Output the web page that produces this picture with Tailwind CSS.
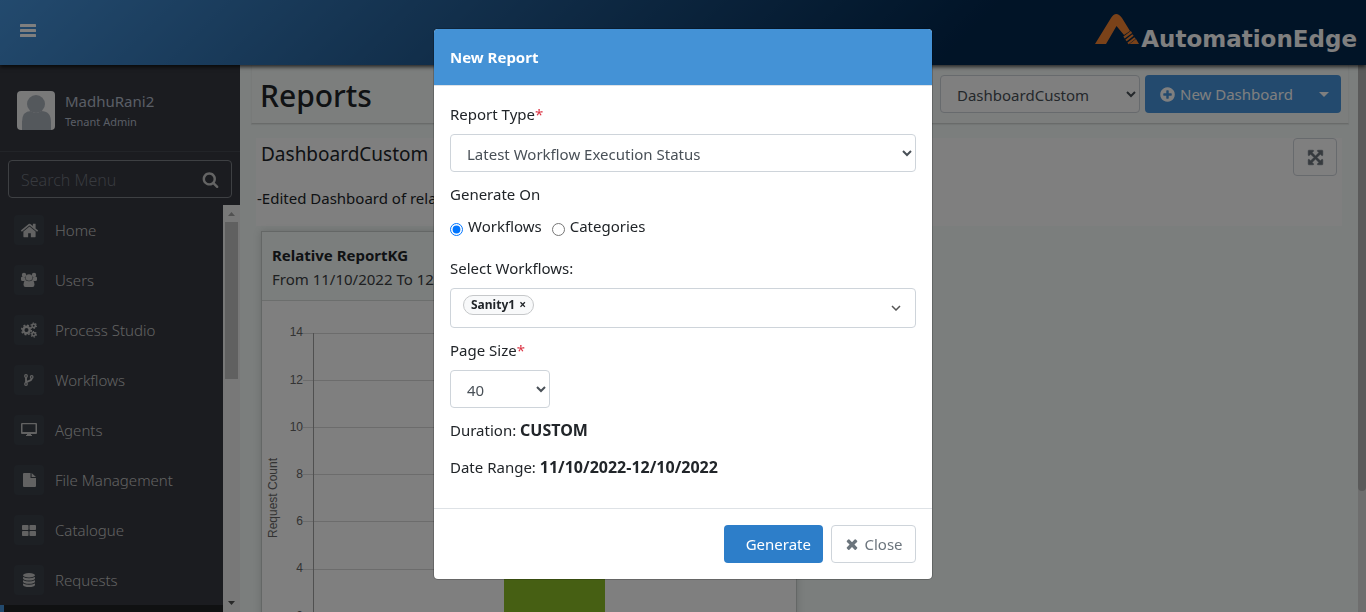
<!DOCTYPE html>
<html lang="en">
<head>
<meta charset="utf-8">
<title>Reports</title>
<script src="https://cdn.jsdelivr.net/npm/@tailwindcss/browser@4"></script>
</head>
<body class="h-screen overflow-hidden flex flex-col bg-[#f6fcfa] font-['Noto_Sans',sans-serif] text-[15px] leading-6 text-[#212529]">

<!-- Top bar -->
<header class="relative z-10 h-[65px] shrink-0 flex items-center justify-between pl-5 pr-[9px] bg-linear-135 from-[#4694dc] to-[#03284f] to-70% shadow-[0_2px_4px_rgba(0,0,0,0.7)]">
  <button aria-label="Toggle menu" class="text-white pb-1"><svg class="w-4 h-[14px]" viewBox="0 0 16 14" fill="currentColor"><rect y="0" width="16" height="3" rx="0.6"/><rect y="5" width="16" height="3" rx="0.6"/><rect y="10" width="16" height="3" rx="0.6"/></svg></button>
  <a href="#" class="flex items-end text-white pt-1">
    <svg class="w-[44px] h-8 mb-3" viewBox="0 0 44 32"><path fill="#f58433" d="M0 31 16 5Q21-3 27 5L35 18 29 22 21.500 13 11 31Z"/><path stroke="#f58433" stroke-width="2.200" d="M29 24.500 36.500 19M31 27.500 38 22M33 30.500 40 25"/><path fill="#f58433" d="M34.500 31 41 26 44 31Z"/></svg>
    <span class="ml-[2px] font-['DejaVu_Sans',sans-serif] font-bold text-[23px] leading-9">AutomationEdge</span>
  </a>
</header>

<div class="flex flex-1 min-h-0">
  <!-- Sidebar -->
  <aside class="w-60 shrink-0 flex flex-col bg-[#363840]">
    <div class="h-[87px] shrink-0 flex items-center gap-[10px] pl-[17px] pb-px pt-[6px] border-b border-[#454850]">
      <svg class="w-[38px] h-[39px] rounded" viewBox="0 0 38 39"><rect width="38" height="39" fill="#f2f2f2"/><g fill="#a9b0b9"><circle cx="19" cy="13" r="9"/><path d="M5 39V31Q5 20 14 20 19 24 24 20 34 20 34 31V39Z"/></g></svg>
      <div class="text-[#b4bccb]">
        <div class="text-[15px] leading-[22px]">MadhuRani2</div>
        <div class="text-[11px] leading-5">Tenant Admin</div>
      </div>
    </div>
    <div class="p-2 pb-[7px]">
      <form class="h-[38px] flex items-center rounded border border-[#7d8086] px-3">
        <input aria-label="Search Menu" placeholder="Search Menu" class="min-w-0 flex-1 pt-px bg-transparent text-base font-light outline-none placeholder:text-[#70757e]">
        <button type="button" aria-label="Search" class="text-[#c8c8c8]"><svg class="w-[17px] h-[17px]" viewBox="0 0 1792 1792" fill="currentColor"><path d="M1216 832q0-185-131.500-316.500t-316.500-131.500-316.500 131.500-131.500 316.500 131.500 316.500 316.500 131.500 316.500-131.500 131.500-316.500zm512 832q0 52-38 90t-90 38q-54 0-90-38l-343-342q-179 124-399 124-143 0-273.500-55.500t-225-150-150-225-55.500-273.500 55.500-273.500 150-225 225-150 273.500-55.500 273.500 55.500 225 150 150 225 55.500 273.500q0 220-124 399l343 343q37 37 37 90z"/></svg></button>
      </form>
    </div>
    <div class="flex flex-1 min-h-0">
      <nav class="flex-1 min-h-0 overflow-hidden text-[15px] font-light text-[#c4c4c4]">
        <a href="#" class="h-[50px] flex items-center gap-[11px] pl-[14px]"><span class="size-[30px] rounded bg-[#3a4149] grid place-items-center"><svg class="size-[19px]" viewBox="0 0 1792 1792" fill="#c4c4c4"><path d="M1472 992v480q0 26-19 45t-45 19h-384v-384h-256v384h-384q-26 0-45-19t-19-45v-480q0-1 .5-3t.5-3l575-474 575 474q1 2 1 6zm223-69l-62 74q-8 9-21 11h-3q-13 0-21-7l-692-577-692 577q-12 8-24 7-13-2-21-11l-62-74q-8-10-7-23.500t11-21.500l719-599q32-26 76-26t76 26l244 204v-195q0-14 9-23t23-9h192q14 0 23 9t9 23v408l219 182q10 8 11 21.500t-7 23.500z"/></svg></span>Home</a>
        <a href="#" class="h-[50px] flex items-center gap-[11px] pl-[14px]"><span class="size-[30px] rounded bg-[#3a4149] grid place-items-center"><svg class="size-4" viewBox="0 0 16 16" fill="#c4c4c4"><circle cx="3" cy="3" r="2.200"/><circle cx="13" cy="3" r="2.200"/><path d="M0 6Q0 4.500 1.500 4.800L4.500 5.500Q4 7 5 8.500L3.500 9H1.500Q0 9 0 7.500ZM16 6Q16 4.500 14.500 4.800L11.500 5.500Q12 7 11 8.500L12.500 9H14.500Q16 9 16 7.500Z"/><circle cx="8" cy="5.500" r="3.300"/><path d="M4.500 8Q8 10.500 11.500 8 13.500 9 13.500 12.500 13.500 15 11.500 15H4.500Q2.500 15 2.500 12.500 2.500 9 4.500 8Z"/></svg></span>Users</a>
        <a href="#" class="h-[50px] flex items-center gap-[11px] pl-[14px]"><span class="size-[30px] rounded bg-[#3a4149] grid place-items-center"><svg class="size-4" viewBox="0 0 16 16" fill="none" stroke="#c4c4c4"><circle cx="5.500" cy="8" r="3.200" stroke-width="2.400"/><circle cx="5.500" cy="8" r="4.800" stroke-width="1.600" stroke-dasharray="1.900 1.870"/><circle cx="12.700" cy="3.700" r="1.700" stroke-width="1.500"/><circle cx="12.700" cy="3.700" r="2.700" stroke-width="1.200" stroke-dasharray="1.400 1.430"/><circle cx="12.700" cy="12.300" r="1.700" stroke-width="1.500"/><circle cx="12.700" cy="12.300" r="2.700" stroke-width="1.200" stroke-dasharray="1.400 1.430"/></svg></span>Process Studio</a>
        <a href="#" class="h-[50px] flex items-center gap-[11px] pl-[14px]"><span class="size-[30px] rounded bg-[#3a4149] grid place-items-center"><svg class="w-[10px] h-3" viewBox="0 0 10 12" fill="none" stroke="#c4c4c4"><circle cx="2" cy="2" r="1.300" stroke-width="1.200"/><circle cx="2" cy="10" r="1.300" stroke-width="1.200"/><circle cx="7.700" cy="3" r="1.300" stroke-width="1.200"/><path stroke-width="1.800" d="M2 3.300V8.700M7.700 4.300Q7.700 6.300 5 7 2.400 7.600 2 8.700"/></svg></span>Workflows</a>
        <a href="#" class="h-[50px] flex items-center gap-[11px] pl-[14px]"><span class="size-[30px] rounded bg-[#3a4149] grid place-items-center"><svg class="w-4 h-[14px]" viewBox="0 0 16 14" fill="#c4c4c4"><path fill-rule="evenodd" d="M1 0H15Q16 0 16 1V10Q16 11 15 11H10V12H11V13H5V12H6V11H1Q0 11 0 10V1Q0 0 1 0ZM1.500 1.300V9H14.500V1.300Z"/></svg></span>Agents</a>
        <a href="#" class="h-[50px] flex items-center gap-[11px] pl-[14px]"><span class="size-[30px] rounded bg-[#3a4149] grid place-items-center"><svg class="w-[13px] h-[14px]" viewBox="0 0 13 14" fill="#c4c4c4"><path d="M1 0H7.500V5H13V13Q13 14 12 14H1Q0 14 0 13V1Q0 0 1 0ZM8.600 0 13 4H8.600Z"/></svg></span>File Management</a>
        <a href="#" class="h-[50px] flex items-center gap-[11px] pl-[14px]"><span class="size-[30px] rounded bg-[#3a4149] grid place-items-center"><svg class="w-[14px] h-[11px]" viewBox="0 0 14 11" fill="#c4c4c4"><rect width="6.500" height="5" rx="0.800"/><rect x="7.500" width="6.500" height="5" rx="0.800"/><rect y="6" width="6.500" height="5" rx="0.800"/><rect x="7.500" y="6" width="6.500" height="5" rx="0.800"/></svg></span>Catalogue</a>
        <a href="#" class="h-[50px] flex items-center gap-[11px] pl-[14px]"><span class="size-[30px] rounded bg-[#3a4149] grid place-items-center"><svg class="w-3 h-[14px]" viewBox="0 0 12 14" fill="#c4c4c4"><ellipse cx="6" cy="2.200" rx="6" ry="2.200"/><path d="M0 4Q6 6.500 12 4V5.500Q11 7.500 6 7.500T0 5.500ZM0 7.200Q6 9.700 12 7.200V8.700Q11 10.700 6 10.700T0 8.700ZM0 10.400Q6 12.900 12 10.400V12Q11 14 6 14T0 12Z"/></svg></span>Requests</a>
        <a href="#" aria-label="Reports" class="block h-[50px] border-l-4 border-[#4694dc] bg-[#202225]"></a>
      </nav>
      <div aria-hidden="true" class="w-[17px] shrink-0 bg-[#f1f1f1] flex flex-col items-center justify-between">
        <div class="w-full flex flex-col items-center">
          <svg class="size-[17px]" viewBox="0 0 17 17" fill="#a3a3a3"><path d="M5 11H12L8.500 7Z"/></svg>
          <div class="w-[13px] h-[157px] bg-[#c1c1c1]"></div>
        </div>
        <svg class="size-[17px]" viewBox="0 0 17 17" fill="#505050"><path d="M5 6H12L8.500 10Z"/></svg>
      </div>
    </div>
  </aside>

  <!-- Page content -->
  <main class="flex-1 min-w-0 overflow-hidden pl-[11px] pr-[9px]">
    <div class="h-[59px] flex items-center justify-between pl-2 pr-[7px] bg-[#f8fdfb] border-b border-x border-b-[#d2d6d5] border-x-[#f0f4f3] shadow-[0_1px_1px_rgba(0,0,0,0.06)]">
      <h1 class="text-[30px] leading-9 font-medium pt-1">Reports</h1>
      <div class="flex gap-[5px]">
        <select aria-label="Dashboard" class="w-[200px] h-[38px] rounded border border-[#ced4da] bg-white px-3 pt-px text-[#495057]"><option>DashboardCustom</option></select>
        <button class="w-[196px] h-[38px] rounded bg-[#4694dc] text-white flex items-center pl-[14px] pr-3"><svg class="size-[17px] mr-1" viewBox="0 0 1792 1792" fill="currentColor"><path d="M1344 960v-128q0-26-19-45t-45-19h-256v-256q0-26-19-45t-45-19h-128q-26 0-45 19t-19 45v256h-256q-26 0-45 19t-19 45v128q0 26 19 45t45 19h256v256q0 26 19 45t45 19h128q26 0 45-19t19-45v-256h256q26 0 45-19t19-45zm320-64q0 209-103 385.500t-279.500 279.500-385.500 103-385.500-103-279.500-279.500-103-385.500 103-385.500 279.500-279.500 385.500-103 385.500 103 279.500 279.500 103 385.500z"/></svg>New Dashboard<svg class="w-[10px] h-[5px] ml-auto" viewBox="0 0 10 5" fill="currentColor"><path d="M0 0H10L5 5Z"/></svg></button>
      </div>
    </div>

    <section class="mt-[14px] ml-[5px] mr-[7px] h-[88px] bg-white flex justify-between items-start pr-[5px]">
      <div>
        <h2 class="text-[19px] leading-8 pl-[5px]">DashboardCustom</h2>
        <p class="mt-4 pl-px">-Edited Dashboard of related reports</p>
      </div>
      <button aria-label="Full screen" class="w-11 h-[38px] rounded border border-[#ced4da] grid place-items-center text-[#6c757d]"><svg class="size-[17px]" viewBox="0 0 1792 1792" fill="currentColor"><path stroke="currentColor" stroke-width="60" d="M1411 541l-355 355 355 355 144-144q29-31 70-14 39 17 39 59v448q0 26-19 45t-45 19h-448q-42 0-59-40-17-39 14-69l144-144-355-355-355 355 144 144q31 30 14 69-17 40-59 40h-448q-26 0-45-19t-19-45v-448q0-42 40-59 39-17 69 14l144 144 355-355-355-355-144 144q-19 19-45 19-12 0-24-5-40-17-40-59v-448q0-26 19-45t45-19h448q42 0 59 40 17 39-14 69l-144 144 355 355 355-355-144-144q-31-30-14-69 17-40 59-40h448q26 0 45 19t19 45v448q0 42-39 59-13 5-25 5-26 0-45-19z"/></svg></button>
    </section>

    <article class="mt-[5px] ml-[10px] w-[536px] border border-[#c9cfcd] bg-white shadow-[0_0_8px_rgba(0,0,0,0.15)]">
      <div class="h-[69px] pl-[10px] pt-[11px] bg-[#f6fcfa] border-b border-[#d8dcda]">
        <h3 class="font-bold leading-6">Relative ReportKG</h3>
        <p class="leading-6 text-[#3c4043]">From 11/10/2022 To 12/10/2022</p>
      </div>
      <svg class="block w-[534px] h-[400px] font-['Liberation_Sans',sans-serif] text-xs" viewBox="0 0 534 400">
        <path stroke="#d8d8d8" d="M41 32.500H520M41 79.500H520M41 126.500H520M41 173.500H520M41 220.500H520M41 268.500H520M41 315.500H520"/>
        <rect x="242" y="150" width="101" height="220" fill="#8cbf26"/>
        <path stroke="#a0a0a0" d="M51.500 32V370"/>
        <g fill="#666" text-anchor="end"><text x="41" y="35">14</text><text x="41" y="83">12</text><text x="41" y="130">10</text><text x="41" y="177">8</text><text x="41" y="224">6</text><text x="41" y="271">4</text><text x="41" y="319">2</text></g>
        <text fill="#666" text-anchor="middle" transform="translate(15 197) rotate(-90)">Request Count</text>
      </svg>
    </article>
  </main>
  <div aria-hidden="true" class="w-2 shrink-0 bg-[#dcdcdc]"><div class="h-[426px] rounded-b bg-[#b4b4b4]"></div></div>
</div>

<!-- Modal -->
<div class="fixed inset-0 z-20 bg-black/50 flex items-start justify-center pt-7">
  <div role="dialog" aria-labelledby="modal-title" class="w-[500px] max-w-full rounded-[5px] border border-black/20 bg-white bg-clip-padding overflow-hidden">
    <div class="h-[57px] px-4 flex items-center bg-[#4492d6] border-b border-[#dee2e6]">
      <h2 id="modal-title" class="font-bold text-[15px] text-white">New Report</h2>
    </div>
    <form class="px-4 pt-4 pb-[29px]">
      <label for="type" class="block mb-2">Report Type<span class="text-[#dc3545]">*</span></label>
      <select id="type" class="block w-full h-[38px] rounded border border-[#ced4da] bg-white px-3 pt-px text-[#495057]"><option>Latest Workflow Execution Status</option></select>
      <div class="mt-[10px]">Generate On</div>
      <div class="mt-2 flex items-center">
        <input type="radio" id="wf" name="on" checked class="size-[13px] mt-[6px] accent-[#0075ff]"><label for="wf" class="ml-[5px] mr-[10px]">Workflows</label>
        <input type="radio" id="cat" name="on" class="size-[13px] mt-[6px]"><label for="cat" class="ml-[5px]">Categories</label>
      </div>
      <div class="mt-[18px] mb-2">Select Workflows:</div>
      <div class="h-10 rounded border border-[#ced4da] pl-3 pr-[14px] flex items-center justify-between">
        <span class="h-5 mb-[6px] px-[7px] rounded-full border border-[#c6c8ca] bg-[#f8f9fa] flex items-center gap-1 text-xs font-bold leading-4">Sanity1<button type="button" aria-label="Remove Sanity1">×</button></span>
        <button type="button" aria-label="Open workflows"><svg class="w-[10px] h-[6px]" viewBox="0 0 10 6" fill="none" stroke="#555" stroke-width="1.500"><path d="M1 1 5 5 9 1"/></svg></button>
      </div>
      <label for="size" class="block mt-[10px] mb-2">Page Size<span class="text-[#dc3545]">*</span></label>
      <select id="size" class="block w-[100px] h-[38px] rounded border border-[#ced4da] bg-white px-3 pt-px text-[#495057]"><option>40</option></select>
      <p class="mt-[10px]">Duration: <b class="text-base leading-none">CUSTOM</b></p>
      <p class="mt-[13px]">Date Range: <b class="text-base leading-none">11/10/2022-12/10/2022</b></p>
    </form>
    <div class="p-4 flex justify-end gap-2 border-t border-[#dee2e6]">
      <button class="w-[99px] h-[38px] rounded bg-[#2d7ec9] text-white text-right pr-3">Generate</button>
      <button class="w-[85px] h-[38px] rounded border border-[#ced4da] text-[#6c757d] flex items-center justify-center gap-1"><svg class="size-4" viewBox="0 0 1792 1792" fill="currentColor"><path d="M1490 1322q0 40-28 68l-136 136q-28 28-68 28t-68-28l-294-294-294 294q-28 28-68 28t-68-28l-136-136q-28-28-28-68t28-68l294-294-294-294q-28-28-28-68t28-68l136-136q28-28 68-28t68 28l294 294 294-294q28-28 68-28t68 28l136 136q28 28 28 68t-28 68l-294 294 294 294q28 28 28 68z"/></svg>Close</button>
    </div>
  </div>
</div>
</body>
</html>
